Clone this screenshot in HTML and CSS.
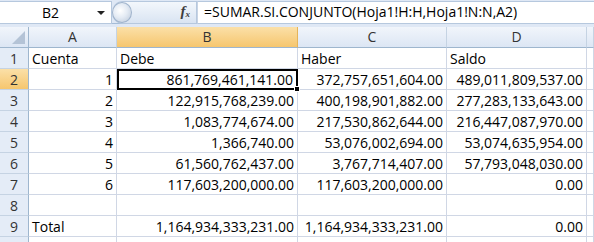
FILE: index.html
```html
<!DOCTYPE html>
<html lang="es">
<head>
<meta charset="utf-8">
<title>Hoja</title>
<link rel="stylesheet" href="styles.css">
</head>
<body>
<div class="app">
  <div class="fbar">
    <div class="namebox"><span class="name">B2</span><span class="drop"></span></div>
    <div class="fxzone"><span class="knob"></span><span class="fx">f<sub>x</sub></span></div>
    <div class="formula">=SUMAR.SI.CONJUNTO(Hoja1!H:H,Hoja1!N:N,A2)</div>
  </div>
  <div class="sheet">
    <div class="hd corner"><span class="tri"></span></div>
    <div class="hd col">A</div>
    <div class="hd col sel">B</div>
    <div class="hd col">C</div>
    <div class="hd col">D</div>
    <div class="hd col last"></div>

    <div class="rh">1</div>
    <div class="c">Cuenta</div><div class="c">Debe</div><div class="c">Haber</div><div class="c">Saldo</div><div class="c"></div>

    <div class="rh sel">2</div>
    <div class="c n">1</div><div class="c n active">861,769,461,141.00<span class="handle"></span></div><div class="c n">372,757,651,604.00</div><div class="c n">489,011,809,537.00</div><div class="c"></div>

    <div class="rh">3</div>
    <div class="c n">2</div><div class="c n">122,915,768,239.00</div><div class="c n">400,198,901,882.00</div><div class="c n">277,283,133,643.00</div><div class="c"></div>

    <div class="rh">4</div>
    <div class="c n">3</div><div class="c n">1,083,774,674.00</div><div class="c n">217,530,862,644.00</div><div class="c n">216,447,087,970.00</div><div class="c"></div>

    <div class="rh">5</div>
    <div class="c n">4</div><div class="c n">1,366,740.00</div><div class="c n">53,076,002,694.00</div><div class="c n">53,074,635,954.00</div><div class="c"></div>

    <div class="rh">6</div>
    <div class="c n">5</div><div class="c n">61,560,762,437.00</div><div class="c n">3,767,714,407.00</div><div class="c n">57,793,048,030.00</div><div class="c"></div>

    <div class="rh">7</div>
    <div class="c n">6</div><div class="c n">117,603,200,000.00</div><div class="c n">117,603,200,000.00</div><div class="c n">0.00</div><div class="c"></div>

    <div class="rh">8</div>
    <div class="c"></div><div class="c"></div><div class="c"></div><div class="c"></div><div class="c"></div>

    <div class="rh">9</div>
    <div class="c">Total</div><div class="c n">1,164,934,333,231.00</div><div class="c n">1,164,934,333,231.00</div><div class="c n">0.00</div><div class="c"></div>

    <div class="rh"></div>
    <div class="c"></div><div class="c"></div><div class="c"></div><div class="c"></div><div class="c"></div>
  </div>
</div>
</body>
</html>
```

FILE: styles.css
```css
* { box-sizing: border-box; }
html, body { margin: 0; padding: 0; background: #fff; }
body { font-family: "Open Sans", "Liberation Sans", sans-serif; font-size: 14px; color: #000; }
.app { width: 594px; height: 242px; overflow: hidden; }

.fbar {
  height: 27px;
  display: flex;
  background: #dfe8f5;
  border-bottom: 3px solid #dfe8f5;
  box-shadow: inset 0 -1px 0 #a5bcd7;
  padding-top: 1px;
}
.namebox {
  width: 112px;
  height: 23px;
  background: #fff;
  border: 1px solid #b6c8de;
  border-left: none;
  display: flex;
  align-items: center;
}
.name { flex: 1; text-align: center; padding-left: 4px; line-height: 20px; }
.drop {
  width: 0; height: 0;
  margin-right: 6px;
  border-left: 4px solid transparent;
  border-right: 4px solid transparent;
  border-top: 4px solid #222;
}
.fxzone {
  width: 85px;
  height: 23px;
  display: flex;
  align-items: center;
  justify-content: space-between;
  background: linear-gradient(#f3f7fc, #d9e4f2);
  border: 1px solid #b6c8de;
  border-left: none;
  border-radius: 11px 0 0 11px;
  padding-right: 6px;
}
.knob {
  width: 20px; height: 21px;
  border-radius: 50%;
  background: radial-gradient(circle at 40% 40%, #ffffff 0, #e4ebf4 45%, #b8c6d8 100%);
  border: 1px solid #9fb3cc;
}
.fx {
  font-family: "Liberation Serif", serif;
  font-style: italic;
  font-weight: bold;
  font-size: 15px;
  color: #3d3d3d;
  line-height: 15px;
}
.fx sub { font-size: 9px; vertical-align: -1px; }
.formula {
  flex: 1;
  height: 23px;
  background: #fff;
  border: 1px solid #b6c8de;
  border-left: 1px solid #c8d4e4;
  border-right: none;
  padding-left: 6px;
  line-height: 20px;
  white-space: nowrap;
}

.sheet {
  display: grid;
  grid-template-columns: 29px 88px 181px 149px 140px 1fr;
  grid-auto-rows: 21px;
}
.hd {
  background: linear-gradient(#f1f5fb, #dce6f4);
  border-right: 1px solid #9eb6ce;
  border-bottom: 1px solid #9eb6ce;
  color: #333;
  text-align: center;
  line-height: 20px;
  font-size: 14px;
}
.hd.col { border-right: 1px solid #c5d3e3; }
.hd.sel { background: linear-gradient(#fbe0a8, #f6c66e); border-right-color: #e5b45a; }
.corner { position: relative; border-right: 1px solid #9eb6ce; }
.tri {
  position: absolute;
  right: 3px; bottom: 3px;
  width: 0; height: 0;
  border-left: 13px solid transparent;
  border-bottom: 13px solid #b4c3d6;
}
.rh {
  background: #e4ecf7;
  border-right: 1px solid #9eb6ce;
  border-bottom: 1px solid #c5d3e3;
  color: #333;
  text-align: center;
  line-height: 21px;
}
.rh.sel { background: linear-gradient(#fbe0a8, #f6c66e); }
.c {
  border-right: 1px solid #d0d7e5;
  border-bottom: 1px solid #d0d7e5;
  padding: 0 3px;
  line-height: 21px;
  white-space: nowrap;
}
.n { text-align: right; }
.active {
  position: relative;
  outline: 2px solid #000;
  outline-offset: -2px;
  border-color: transparent;
  padding-right: 4px;
}
.handle {
  position: absolute;
  right: -3px; bottom: -3px;
  width: 6px; height: 6px;
  background: #000;
  border: 1px solid #fff;
}
```
